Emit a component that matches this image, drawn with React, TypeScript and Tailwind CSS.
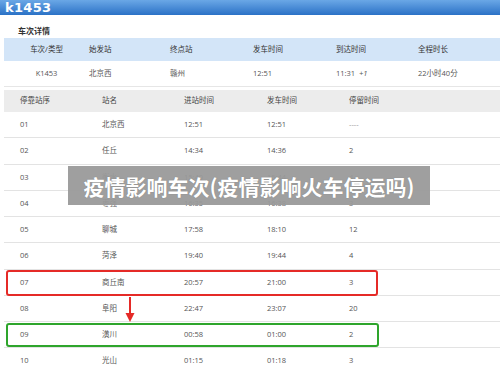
const detail = {
  head: ["车次/类型", "始发站", "终点站", "发车时间", "到达时间", "全程时长"],
  row: ["K1453", "北京西", "赣州", "12:51", "11:31 +1", "22小时40分"]
};

const stops = [
  ["01", "北京西", "12:51", "12:51", "----"],
  ["02", "任丘", "14:34", "14:36", "2"],
  ["03", "衡水", "15:40", "15:44", "4"],
  ["04", "枣强", "16:35", "16:38", "3"],
  ["05", "聊城", "17:58", "18:10", "12"],
  ["06", "菏泽", "19:40", "19:44", "4"],
  ["07", "商丘南", "20:57", "21:00", "3"],
  ["08", "阜阳", "22:47", "23:07", "20"],
  ["09", "潢川", "00:58", "01:00", "2"],
  ["10", "光山", "01:15", "01:18", "3"]
];

const App = () => {
  return <div className="relative w-[500px] h-[372px] overflow-hidden bg-white font-['Open_Sans','Noto_Sans_CJK_SC',sans-serif]">
      {/* Title bar */}
      <div className="h-[15px] flex items-center bg-gradient-to-b from-[#6aa7e6] to-[#2a72c6] pl-[5px]">
        <span className="block text-[13px] leading-[13px] font-bold text-white font-['DejaVu_Sans',sans-serif] tracking-[0.3px]">k1453</span>
      </div>

      <div className="h-[23px] flex items-end pb-[2px] pl-[18px]">
        <span className="text-[8px] leading-[10px] text-[#333] font-bold">车次详情</span>
      </div>

      {/* Train detail */}
      <div className="ml-[4px]">
        <div className="grid grid-cols-[85px_81px_83px_83px_82px_1fr] h-[23px] items-center bg-[#d3e5f8] text-[7.5px] text-[#333]">
          {detail.head.map((h, i) => <div key={h} className={i === 0 ? "text-center" : ""}>{h}</div>)}
        </div>
        <div className="grid grid-cols-[85px_81px_83px_83px_82px_1fr] h-[26px] items-center border-b border-[#e6e6e6] text-[7.5px] text-[#555]">
          {detail.row.map((c, i) => <div key={i} className={i === 0 ? "text-center" : ""}>
              {i === 4 ? <>11:31 <span className="italic ml-[2px]">+1</span></> : c}
            </div>)}
        </div>
      </div>

      {/* Stops */}
      <div className="ml-[4px] mt-[3px]">
        <div className="grid grid-cols-[82px_82px_83px_82px_1fr] h-[22px] items-center bg-[#ececec] pl-[16px] text-[7.5px] text-[#444]">
          <div>停靠站序</div>
          <div>站名</div>
          <div>进站时间</div>
          <div>发车时间</div>
          <div>停留时间</div>
        </div>
        {stops.map(s => <div key={s[0]} className="relative grid grid-cols-[82px_82px_83px_82px_1fr] h-[26.25px] items-center border-b border-[#e3e3e3] pl-[16px] text-[7.5px] text-[#555]">
            {s.map((c, i) => <div key={i} className={i === 4 && c === "----" ? "text-[#999]" : ""}>{c}</div>)}
            {s[0] === "07" && <div className="absolute top-0 bottom-[-1px] left-[2px] w-[372px] border-2 border-[#e52a27] rounded-[3px]" />}
            {s[0] === "09" && <div className="absolute top-[1px] bottom-0 left-[2px] w-[373px] border-2 border-[#2ea52c] rounded-[3px]" />}
          </div>)}
      </div>

      {/* Arrow between boxes */}
      <svg className="absolute left-[125px] top-[297px]" width="10" height="26" viewBox="0 0 10 26">
        <rect x="4" y="0" width="2" height="18" fill="#e52a27" />
        <path d="M0.5 16 L9.5 16 L5 25 Z" fill="#e52a27" />
      </svg>

      {/* Caption overlay */}
      <div className="absolute left-[68px] top-[166px] w-[362px] h-[39px] bg-[#9a9a9a]/95 flex items-center justify-center">
        <span className="text-[21px] leading-[24px] font-bold text-white font-['Noto_Sans_CJK_SC',sans-serif] [text-shadow:0_0_1px_rgba(0,0,0,0.25)]">疫情影响车次(疫情影响火车停运吗)</span>
      </div>
    </div>;
};
export default App;
